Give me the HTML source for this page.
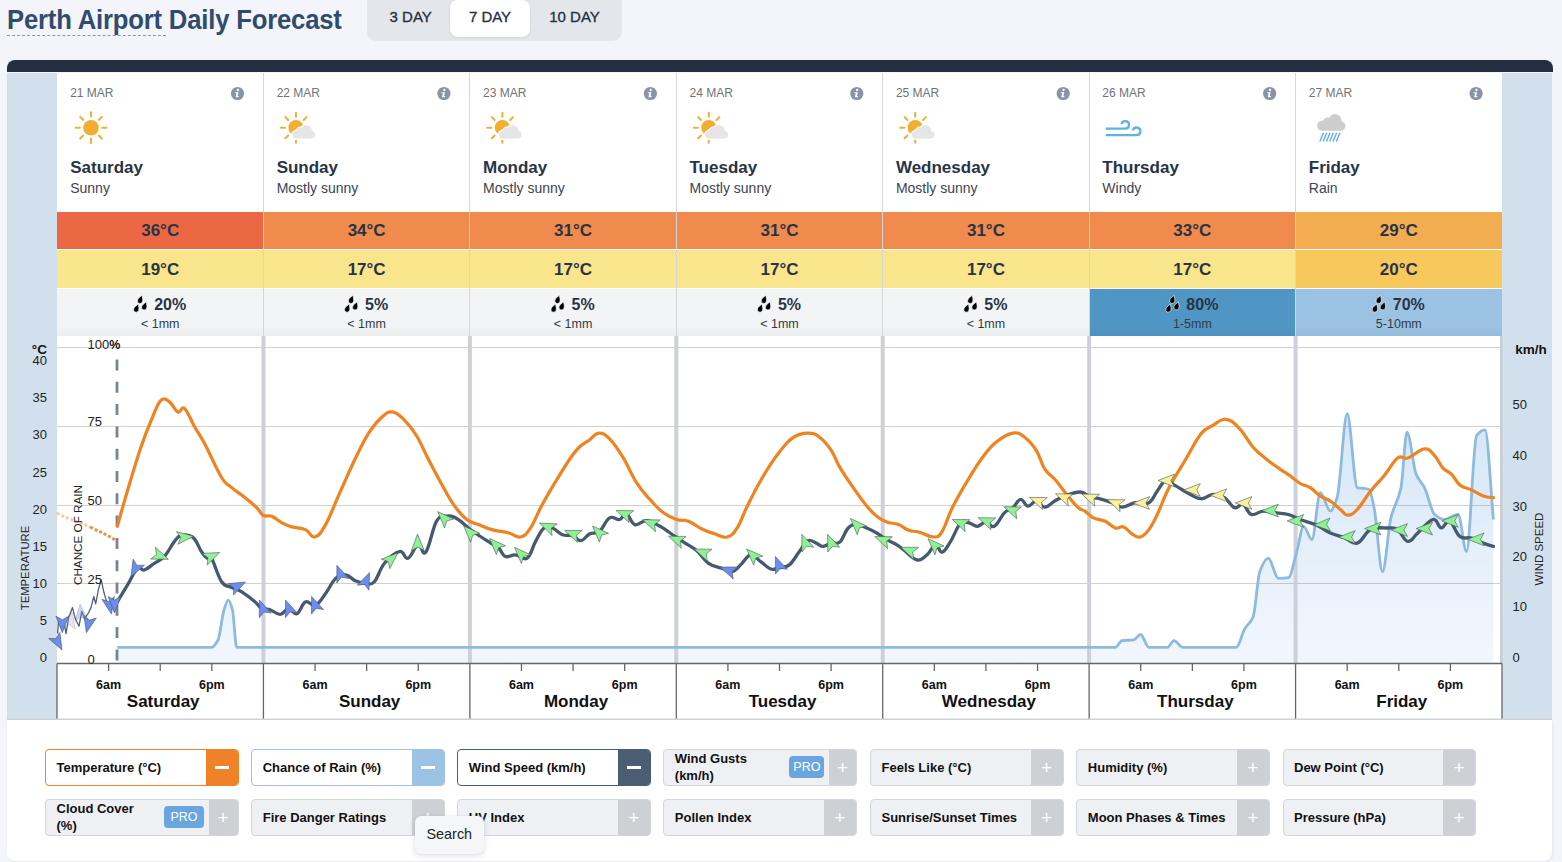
<!DOCTYPE html><html><head><meta charset="utf-8"><style>
*{box-sizing:border-box;margin:0;padding:0}
html,body{width:1562px;height:862px;overflow:hidden;background:#f3f5fa;font-family:"Liberation Sans", sans-serif;position:relative}
.a{position:absolute}
.t{position:absolute;white-space:nowrap;line-height:1}
</style></head><body>
<div class="t" style="left:7px;top:6px;font-size:27.4px;font-weight:700;color:#314b6f;transform:scaleX(0.937);transform-origin:0 0;letter-spacing:-0.2px">Perth Airport Daily Forecast</div><div class="a" style="left:7px;top:35px;width:159px;height:0;border-top:1px dashed #8d97a6"></div><div class="a" style="left:367px;top:-8px;width:255px;height:49px;background:#e3e6ea;border-radius:9px"></div><div class="a" style="left:450px;top:0px;width:80px;height:37px;background:#fff;border-radius:8px;box-shadow:0 1px 3px rgba(0,0,0,0.08)"></div><div class="t" style="left:360.7px;width:100px;text-align:center;top:9px;font-size:15px;color:#222e3d;-webkit-text-stroke:0.3px #222e3d">3 DAY</div><div class="t" style="left:440px;width:100px;text-align:center;top:9px;font-size:15px;color:#222e3d;-webkit-text-stroke:0.3px #222e3d">7 DAY</div><div class="t" style="left:524.5px;width:100px;text-align:center;top:9px;font-size:15px;color:#222e3d;-webkit-text-stroke:0.3px #222e3d">10 DAY</div><div class="a" style="left:7px;top:60px;width:1546px;height:12px;background:#232f40;border-radius:8px 8px 0 0"></div><div class="a" style="left:7px;top:73px;width:50px;height:647px;background:#d2e0ed"></div><div class="a" style="left:1502px;top:73px;width:50px;height:647px;background:#d2e0ed"></div><div class="a" style="left:57px;top:73px;width:1445px;height:139px;background:#fff"></div><div class="a" style="left:57.00px;top:212px;width:206.43px;height:37px;background:#ec6845"></div><div class="a" style="left:57.00px;top:249px;width:206.43px;height:1px;background:#fff"></div><div class="a" style="left:57.00px;top:250px;width:206.43px;height:38px;background:#f9e68c"></div><div class="a" style="left:57.00px;top:288px;width:206.43px;height:1px;background:#fff"></div><div class="a" style="left:57.00px;top:289px;width:206.43px;height:47px;background:#f3f4f6"></div><div class="a" style="left:57.00px;top:326px;width:206.43px;height:10px;background:linear-gradient(to bottom, rgba(0,0,0,0), rgba(0,0,0,0.035))"></div><div class="t" style="left:70.20px;top:87px;font-size:12px;color:#6f7378">21 MAR</div><div class="t" style="left:70.20px;top:159px;font-size:17px;font-weight:700;color:#263445">Saturday</div><div class="t" style="left:70.20px;top:181px;font-size:14px;color:#3a4452">Sunny</div><div class="t" style="left:100.21px;width:120px;text-align:center;top:222px;font-size:17px;font-weight:700;color:#283446">36°C</div><div class="t" style="left:100.21px;width:120px;text-align:center;top:261px;font-size:17px;font-weight:700;color:#283446">19°C</div><div class="t" style="left:110.21px;width:120px;text-align:center;top:297px;font-size:16px;font-weight:700;color:#283446">20%</div><div class="t" style="left:100.21px;width:120px;text-align:center;top:318px;font-size:12.5px;color:#333b46">&lt; 1mm</div><div class="a" style="left:263.43px;top:212px;width:206.43px;height:37px;background:#f08a4d"></div><div class="a" style="left:263.43px;top:249px;width:206.43px;height:1px;background:#fff"></div><div class="a" style="left:263.43px;top:250px;width:206.43px;height:38px;background:#f9e68c"></div><div class="a" style="left:263.43px;top:288px;width:206.43px;height:1px;background:#fff"></div><div class="a" style="left:263.43px;top:289px;width:206.43px;height:47px;background:#f3f4f6"></div><div class="a" style="left:263.43px;top:326px;width:206.43px;height:10px;background:linear-gradient(to bottom, rgba(0,0,0,0), rgba(0,0,0,0.035))"></div><div class="t" style="left:276.63px;top:87px;font-size:12px;color:#6f7378">22 MAR</div><div class="t" style="left:276.63px;top:159px;font-size:17px;font-weight:700;color:#263445">Sunday</div><div class="t" style="left:276.63px;top:181px;font-size:14px;color:#3a4452">Mostly sunny</div><div class="t" style="left:306.64px;width:120px;text-align:center;top:222px;font-size:17px;font-weight:700;color:#283446">34°C</div><div class="t" style="left:306.64px;width:120px;text-align:center;top:261px;font-size:17px;font-weight:700;color:#283446">17°C</div><div class="t" style="left:316.64px;width:120px;text-align:center;top:297px;font-size:16px;font-weight:700;color:#283446">5%</div><div class="t" style="left:306.64px;width:120px;text-align:center;top:318px;font-size:12.5px;color:#333b46">&lt; 1mm</div><div class="a" style="left:469.86px;top:212px;width:206.43px;height:37px;background:#f08a4d"></div><div class="a" style="left:469.86px;top:249px;width:206.43px;height:1px;background:#fff"></div><div class="a" style="left:469.86px;top:250px;width:206.43px;height:38px;background:#f9e68c"></div><div class="a" style="left:469.86px;top:288px;width:206.43px;height:1px;background:#fff"></div><div class="a" style="left:469.86px;top:289px;width:206.43px;height:47px;background:#f3f4f6"></div><div class="a" style="left:469.86px;top:326px;width:206.43px;height:10px;background:linear-gradient(to bottom, rgba(0,0,0,0), rgba(0,0,0,0.035))"></div><div class="t" style="left:483.06px;top:87px;font-size:12px;color:#6f7378">23 MAR</div><div class="t" style="left:483.06px;top:159px;font-size:17px;font-weight:700;color:#263445">Monday</div><div class="t" style="left:483.06px;top:181px;font-size:14px;color:#3a4452">Mostly sunny</div><div class="t" style="left:513.07px;width:120px;text-align:center;top:222px;font-size:17px;font-weight:700;color:#283446">31°C</div><div class="t" style="left:513.07px;width:120px;text-align:center;top:261px;font-size:17px;font-weight:700;color:#283446">17°C</div><div class="t" style="left:523.07px;width:120px;text-align:center;top:297px;font-size:16px;font-weight:700;color:#283446">5%</div><div class="t" style="left:513.07px;width:120px;text-align:center;top:318px;font-size:12.5px;color:#333b46">&lt; 1mm</div><div class="a" style="left:676.29px;top:212px;width:206.43px;height:37px;background:#f08a4d"></div><div class="a" style="left:676.29px;top:249px;width:206.43px;height:1px;background:#fff"></div><div class="a" style="left:676.29px;top:250px;width:206.43px;height:38px;background:#f9e68c"></div><div class="a" style="left:676.29px;top:288px;width:206.43px;height:1px;background:#fff"></div><div class="a" style="left:676.29px;top:289px;width:206.43px;height:47px;background:#f3f4f6"></div><div class="a" style="left:676.29px;top:326px;width:206.43px;height:10px;background:linear-gradient(to bottom, rgba(0,0,0,0), rgba(0,0,0,0.035))"></div><div class="t" style="left:689.49px;top:87px;font-size:12px;color:#6f7378">24 MAR</div><div class="t" style="left:689.49px;top:159px;font-size:17px;font-weight:700;color:#263445">Tuesday</div><div class="t" style="left:689.49px;top:181px;font-size:14px;color:#3a4452">Mostly sunny</div><div class="t" style="left:719.50px;width:120px;text-align:center;top:222px;font-size:17px;font-weight:700;color:#283446">31°C</div><div class="t" style="left:719.50px;width:120px;text-align:center;top:261px;font-size:17px;font-weight:700;color:#283446">17°C</div><div class="t" style="left:729.50px;width:120px;text-align:center;top:297px;font-size:16px;font-weight:700;color:#283446">5%</div><div class="t" style="left:719.50px;width:120px;text-align:center;top:318px;font-size:12.5px;color:#333b46">&lt; 1mm</div><div class="a" style="left:882.71px;top:212px;width:206.43px;height:37px;background:#f08a4d"></div><div class="a" style="left:882.71px;top:249px;width:206.43px;height:1px;background:#fff"></div><div class="a" style="left:882.71px;top:250px;width:206.43px;height:38px;background:#f9e68c"></div><div class="a" style="left:882.71px;top:288px;width:206.43px;height:1px;background:#fff"></div><div class="a" style="left:882.71px;top:289px;width:206.43px;height:47px;background:#f3f4f6"></div><div class="a" style="left:882.71px;top:326px;width:206.43px;height:10px;background:linear-gradient(to bottom, rgba(0,0,0,0), rgba(0,0,0,0.035))"></div><div class="t" style="left:895.91px;top:87px;font-size:12px;color:#6f7378">25 MAR</div><div class="t" style="left:895.91px;top:159px;font-size:17px;font-weight:700;color:#263445">Wednesday</div><div class="t" style="left:895.91px;top:181px;font-size:14px;color:#3a4452">Mostly sunny</div><div class="t" style="left:925.93px;width:120px;text-align:center;top:222px;font-size:17px;font-weight:700;color:#283446">31°C</div><div class="t" style="left:925.93px;width:120px;text-align:center;top:261px;font-size:17px;font-weight:700;color:#283446">17°C</div><div class="t" style="left:935.93px;width:120px;text-align:center;top:297px;font-size:16px;font-weight:700;color:#283446">5%</div><div class="t" style="left:925.93px;width:120px;text-align:center;top:318px;font-size:12.5px;color:#333b46">&lt; 1mm</div><div class="a" style="left:1089.14px;top:212px;width:206.43px;height:37px;background:#f08a4d"></div><div class="a" style="left:1089.14px;top:249px;width:206.43px;height:1px;background:#fff"></div><div class="a" style="left:1089.14px;top:250px;width:206.43px;height:38px;background:#f9e68c"></div><div class="a" style="left:1089.14px;top:288px;width:206.43px;height:1px;background:#fff"></div><div class="a" style="left:1089.14px;top:289px;width:206.43px;height:47px;background:#5096c4"></div><div class="a" style="left:1089.14px;top:326px;width:206.43px;height:10px;background:linear-gradient(to bottom, rgba(0,0,0,0), rgba(0,0,0,0.035))"></div><div class="t" style="left:1102.34px;top:87px;font-size:12px;color:#6f7378">26 MAR</div><div class="t" style="left:1102.34px;top:159px;font-size:17px;font-weight:700;color:#263445">Thursday</div><div class="t" style="left:1102.34px;top:181px;font-size:14px;color:#3a4452">Windy</div><div class="t" style="left:1132.36px;width:120px;text-align:center;top:222px;font-size:17px;font-weight:700;color:#283446">33°C</div><div class="t" style="left:1132.36px;width:120px;text-align:center;top:261px;font-size:17px;font-weight:700;color:#283446">17°C</div><div class="t" style="left:1142.36px;width:120px;text-align:center;top:297px;font-size:16px;font-weight:700;color:#283446">80%</div><div class="t" style="left:1132.36px;width:120px;text-align:center;top:318px;font-size:12.5px;color:#333b46">1-5mm</div><div class="a" style="left:1295.57px;top:212px;width:206.43px;height:37px;background:#f2ad50"></div><div class="a" style="left:1295.57px;top:249px;width:206.43px;height:1px;background:#fff"></div><div class="a" style="left:1295.57px;top:250px;width:206.43px;height:38px;background:#f7c95c"></div><div class="a" style="left:1295.57px;top:288px;width:206.43px;height:1px;background:#fff"></div><div class="a" style="left:1295.57px;top:289px;width:206.43px;height:47px;background:#9bc2e2"></div><div class="a" style="left:1295.57px;top:326px;width:206.43px;height:10px;background:linear-gradient(to bottom, rgba(0,0,0,0), rgba(0,0,0,0.035))"></div><div class="t" style="left:1308.77px;top:87px;font-size:12px;color:#6f7378">27 MAR</div><div class="t" style="left:1308.77px;top:159px;font-size:17px;font-weight:700;color:#263445">Friday</div><div class="t" style="left:1308.77px;top:181px;font-size:14px;color:#3a4452">Rain</div><div class="t" style="left:1338.79px;width:120px;text-align:center;top:222px;font-size:17px;font-weight:700;color:#283446">29°C</div><div class="t" style="left:1338.79px;width:120px;text-align:center;top:261px;font-size:17px;font-weight:700;color:#283446">20°C</div><div class="t" style="left:1348.79px;width:120px;text-align:center;top:297px;font-size:16px;font-weight:700;color:#283446">70%</div><div class="t" style="left:1338.79px;width:120px;text-align:center;top:318px;font-size:12.5px;color:#333b46">5-10mm</div><svg class="a" style="left:0;top:0" width="1562" height="340" viewBox="0 0 1562 340"><circle cx="237.50" cy="93.5" r="6.6" fill="#8893a5"/><circle cx="237.90" cy="90.00" r="1.15" fill="#fff"/><path transform="translate(237.50,93.5)" d="M-2.5,-1.3 L1,-1.3 L0.2,2.4 L1.3,2.4 L1.1,3.7 L-1.9,3.7 L-1.1,-0.4 L-2.7,-0.4 Z" fill="#fff"/><circle cx="91.00" cy="127.7" r="7.8" fill="#f2ae2f"/><line x1="102.20" y1="127.70" x2="106.30" y2="127.70" stroke="#f2ae2f" stroke-width="2.1" stroke-linecap="round"/><line x1="98.92" y1="135.62" x2="101.82" y2="138.52" stroke="#f2ae2f" stroke-width="2.1" stroke-linecap="round"/><line x1="91.00" y1="138.90" x2="91.00" y2="143.00" stroke="#f2ae2f" stroke-width="2.1" stroke-linecap="round"/><line x1="83.08" y1="135.62" x2="80.18" y2="138.52" stroke="#f2ae2f" stroke-width="2.1" stroke-linecap="round"/><line x1="79.80" y1="127.70" x2="75.70" y2="127.70" stroke="#f2ae2f" stroke-width="2.1" stroke-linecap="round"/><line x1="83.08" y1="119.78" x2="80.18" y2="116.88" stroke="#f2ae2f" stroke-width="2.1" stroke-linecap="round"/><line x1="91.00" y1="116.50" x2="91.00" y2="112.40" stroke="#f2ae2f" stroke-width="2.1" stroke-linecap="round"/><line x1="98.92" y1="119.78" x2="101.82" y2="116.88" stroke="#f2ae2f" stroke-width="2.1" stroke-linecap="round"/><path d="M140.21,295.00 C141.41,297.30 142.81,298.70 142.81,300.90 A2.6,2.6 0 1 1 137.61,300.90 C137.61,298.70 139.01,297.30 140.21,295.00 Z" fill="#000" stroke="#fff" stroke-width="0.6" transform="rotate(20 140.21 300.30)"/><path d="M136.41,303.70 C137.61,306.00 139.01,307.40 139.01,309.60 A2.6,2.6 0 1 1 133.81,309.60 C133.81,307.40 135.21,306.00 136.41,303.70 Z" fill="#000" stroke="#fff" stroke-width="0.6" transform="rotate(20 136.41 309.00)"/><path d="M144.41,301.50 C145.61,303.80 147.01,305.20 147.01,307.40 A2.6,2.6 0 1 1 141.81,307.40 C141.81,305.20 143.21,303.80 144.41,301.50 Z" fill="#000" stroke="#fff" stroke-width="0.6" transform="rotate(20 144.41 306.80)"/><circle cx="443.93" cy="93.5" r="6.6" fill="#8893a5"/><circle cx="444.33" cy="90.00" r="1.15" fill="#fff"/><path transform="translate(443.93,93.5)" d="M-2.5,-1.3 L1,-1.3 L0.2,2.4 L1.3,2.4 L1.1,3.7 L-1.9,3.7 L-1.1,-0.4 L-2.7,-0.4 Z" fill="#fff"/><circle cx="295.93" cy="127.7" r="7.6" fill="#f2ae2f"/><line x1="306.93" y1="127.70" x2="310.93" y2="127.70" stroke="#f2ae2f" stroke-width="2.0" stroke-linecap="round"/><line x1="303.71" y1="135.48" x2="306.54" y2="138.31" stroke="#f2ae2f" stroke-width="2.0" stroke-linecap="round"/><line x1="295.93" y1="138.70" x2="295.93" y2="142.70" stroke="#f2ae2f" stroke-width="2.0" stroke-linecap="round"/><line x1="288.15" y1="135.48" x2="285.32" y2="138.31" stroke="#f2ae2f" stroke-width="2.0" stroke-linecap="round"/><line x1="284.93" y1="127.70" x2="280.93" y2="127.70" stroke="#f2ae2f" stroke-width="2.0" stroke-linecap="round"/><line x1="288.15" y1="119.92" x2="285.32" y2="117.09" stroke="#f2ae2f" stroke-width="2.0" stroke-linecap="round"/><line x1="295.93" y1="116.70" x2="295.93" y2="112.70" stroke="#f2ae2f" stroke-width="2.0" stroke-linecap="round"/><line x1="303.71" y1="119.92" x2="306.54" y2="117.09" stroke="#f2ae2f" stroke-width="2.0" stroke-linecap="round"/><g fill="#ffffff" stroke="#ffffff" stroke-width="2.2"><circle cx="296.13" cy="134.80" r="3.8"/><circle cx="300.53" cy="131.60" r="4"/><circle cx="306.33" cy="130.60" r="5.6"/><circle cx="311.33" cy="134.80" r="3.8"/><rect x="296.13" y="130.60" width="15.2" height="8"/></g><g fill="#e6e6e6"><circle cx="296.13" cy="134.80" r="3.8"/><circle cx="300.53" cy="131.60" r="4"/><circle cx="306.33" cy="130.60" r="5.6"/><circle cx="311.33" cy="134.80" r="3.8"/><rect x="296.13" y="130.60" width="15.2" height="8"/></g><path d="M351.14,295.00 C352.34,297.30 353.74,298.70 353.74,300.90 A2.6,2.6 0 1 1 348.54,300.90 C348.54,298.70 349.94,297.30 351.14,295.00 Z" fill="#000" stroke="#fff" stroke-width="0.6" transform="rotate(20 351.14 300.30)"/><path d="M347.34,303.70 C348.54,306.00 349.94,307.40 349.94,309.60 A2.6,2.6 0 1 1 344.74,309.60 C344.74,307.40 346.14,306.00 347.34,303.70 Z" fill="#000" stroke="#fff" stroke-width="0.6" transform="rotate(20 347.34 309.00)"/><path d="M355.34,301.50 C356.54,303.80 357.94,305.20 357.94,307.40 A2.6,2.6 0 1 1 352.74,307.40 C352.74,305.20 354.14,303.80 355.34,301.50 Z" fill="#000" stroke="#fff" stroke-width="0.6" transform="rotate(20 355.34 306.80)"/><circle cx="650.36" cy="93.5" r="6.6" fill="#8893a5"/><circle cx="650.76" cy="90.00" r="1.15" fill="#fff"/><path transform="translate(650.36,93.5)" d="M-2.5,-1.3 L1,-1.3 L0.2,2.4 L1.3,2.4 L1.1,3.7 L-1.9,3.7 L-1.1,-0.4 L-2.7,-0.4 Z" fill="#fff"/><circle cx="502.36" cy="127.7" r="7.6" fill="#f2ae2f"/><line x1="513.36" y1="127.70" x2="517.36" y2="127.70" stroke="#f2ae2f" stroke-width="2.0" stroke-linecap="round"/><line x1="510.14" y1="135.48" x2="512.96" y2="138.31" stroke="#f2ae2f" stroke-width="2.0" stroke-linecap="round"/><line x1="502.36" y1="138.70" x2="502.36" y2="142.70" stroke="#f2ae2f" stroke-width="2.0" stroke-linecap="round"/><line x1="494.58" y1="135.48" x2="491.75" y2="138.31" stroke="#f2ae2f" stroke-width="2.0" stroke-linecap="round"/><line x1="491.36" y1="127.70" x2="487.36" y2="127.70" stroke="#f2ae2f" stroke-width="2.0" stroke-linecap="round"/><line x1="494.58" y1="119.92" x2="491.75" y2="117.09" stroke="#f2ae2f" stroke-width="2.0" stroke-linecap="round"/><line x1="502.36" y1="116.70" x2="502.36" y2="112.70" stroke="#f2ae2f" stroke-width="2.0" stroke-linecap="round"/><line x1="510.14" y1="119.92" x2="512.96" y2="117.09" stroke="#f2ae2f" stroke-width="2.0" stroke-linecap="round"/><g fill="#ffffff" stroke="#ffffff" stroke-width="2.2"><circle cx="502.56" cy="134.80" r="3.8"/><circle cx="506.96" cy="131.60" r="4"/><circle cx="512.76" cy="130.60" r="5.6"/><circle cx="517.76" cy="134.80" r="3.8"/><rect x="502.56" y="130.60" width="15.2" height="8"/></g><g fill="#e6e6e6"><circle cx="502.56" cy="134.80" r="3.8"/><circle cx="506.96" cy="131.60" r="4"/><circle cx="512.76" cy="130.60" r="5.6"/><circle cx="517.76" cy="134.80" r="3.8"/><rect x="502.56" y="130.60" width="15.2" height="8"/></g><path d="M557.57,295.00 C558.77,297.30 560.17,298.70 560.17,300.90 A2.6,2.6 0 1 1 554.97,300.90 C554.97,298.70 556.37,297.30 557.57,295.00 Z" fill="#000" stroke="#fff" stroke-width="0.6" transform="rotate(20 557.57 300.30)"/><path d="M553.77,303.70 C554.97,306.00 556.37,307.40 556.37,309.60 A2.6,2.6 0 1 1 551.17,309.60 C551.17,307.40 552.57,306.00 553.77,303.70 Z" fill="#000" stroke="#fff" stroke-width="0.6" transform="rotate(20 553.77 309.00)"/><path d="M561.77,301.50 C562.97,303.80 564.37,305.20 564.37,307.40 A2.6,2.6 0 1 1 559.17,307.40 C559.17,305.20 560.57,303.80 561.77,301.50 Z" fill="#000" stroke="#fff" stroke-width="0.6" transform="rotate(20 561.77 306.80)"/><circle cx="856.79" cy="93.5" r="6.6" fill="#8893a5"/><circle cx="857.19" cy="90.00" r="1.15" fill="#fff"/><path transform="translate(856.79,93.5)" d="M-2.5,-1.3 L1,-1.3 L0.2,2.4 L1.3,2.4 L1.1,3.7 L-1.9,3.7 L-1.1,-0.4 L-2.7,-0.4 Z" fill="#fff"/><circle cx="708.79" cy="127.7" r="7.6" fill="#f2ae2f"/><line x1="719.79" y1="127.70" x2="723.79" y2="127.70" stroke="#f2ae2f" stroke-width="2.0" stroke-linecap="round"/><line x1="716.56" y1="135.48" x2="719.39" y2="138.31" stroke="#f2ae2f" stroke-width="2.0" stroke-linecap="round"/><line x1="708.79" y1="138.70" x2="708.79" y2="142.70" stroke="#f2ae2f" stroke-width="2.0" stroke-linecap="round"/><line x1="701.01" y1="135.48" x2="698.18" y2="138.31" stroke="#f2ae2f" stroke-width="2.0" stroke-linecap="round"/><line x1="697.79" y1="127.70" x2="693.79" y2="127.70" stroke="#f2ae2f" stroke-width="2.0" stroke-linecap="round"/><line x1="701.01" y1="119.92" x2="698.18" y2="117.09" stroke="#f2ae2f" stroke-width="2.0" stroke-linecap="round"/><line x1="708.79" y1="116.70" x2="708.79" y2="112.70" stroke="#f2ae2f" stroke-width="2.0" stroke-linecap="round"/><line x1="716.56" y1="119.92" x2="719.39" y2="117.09" stroke="#f2ae2f" stroke-width="2.0" stroke-linecap="round"/><g fill="#ffffff" stroke="#ffffff" stroke-width="2.2"><circle cx="708.99" cy="134.80" r="3.8"/><circle cx="713.39" cy="131.60" r="4"/><circle cx="719.19" cy="130.60" r="5.6"/><circle cx="724.19" cy="134.80" r="3.8"/><rect x="708.99" y="130.60" width="15.2" height="8"/></g><g fill="#e6e6e6"><circle cx="708.99" cy="134.80" r="3.8"/><circle cx="713.39" cy="131.60" r="4"/><circle cx="719.19" cy="130.60" r="5.6"/><circle cx="724.19" cy="134.80" r="3.8"/><rect x="708.99" y="130.60" width="15.2" height="8"/></g><path d="M764.00,295.00 C765.20,297.30 766.60,298.70 766.60,300.90 A2.6,2.6 0 1 1 761.40,300.90 C761.40,298.70 762.80,297.30 764.00,295.00 Z" fill="#000" stroke="#fff" stroke-width="0.6" transform="rotate(20 764.00 300.30)"/><path d="M760.20,303.70 C761.40,306.00 762.80,307.40 762.80,309.60 A2.6,2.6 0 1 1 757.60,309.60 C757.60,307.40 759.00,306.00 760.20,303.70 Z" fill="#000" stroke="#fff" stroke-width="0.6" transform="rotate(20 760.20 309.00)"/><path d="M768.20,301.50 C769.40,303.80 770.80,305.20 770.80,307.40 A2.6,2.6 0 1 1 765.60,307.40 C765.60,305.20 767.00,303.80 768.20,301.50 Z" fill="#000" stroke="#fff" stroke-width="0.6" transform="rotate(20 768.20 306.80)"/><circle cx="1063.21" cy="93.5" r="6.6" fill="#8893a5"/><circle cx="1063.61" cy="90.00" r="1.15" fill="#fff"/><path transform="translate(1063.21,93.5)" d="M-2.5,-1.3 L1,-1.3 L0.2,2.4 L1.3,2.4 L1.1,3.7 L-1.9,3.7 L-1.1,-0.4 L-2.7,-0.4 Z" fill="#fff"/><circle cx="915.21" cy="127.7" r="7.6" fill="#f2ae2f"/><line x1="926.21" y1="127.70" x2="930.21" y2="127.70" stroke="#f2ae2f" stroke-width="2.0" stroke-linecap="round"/><line x1="922.99" y1="135.48" x2="925.82" y2="138.31" stroke="#f2ae2f" stroke-width="2.0" stroke-linecap="round"/><line x1="915.21" y1="138.70" x2="915.21" y2="142.70" stroke="#f2ae2f" stroke-width="2.0" stroke-linecap="round"/><line x1="907.44" y1="135.48" x2="904.61" y2="138.31" stroke="#f2ae2f" stroke-width="2.0" stroke-linecap="round"/><line x1="904.21" y1="127.70" x2="900.21" y2="127.70" stroke="#f2ae2f" stroke-width="2.0" stroke-linecap="round"/><line x1="907.44" y1="119.92" x2="904.61" y2="117.09" stroke="#f2ae2f" stroke-width="2.0" stroke-linecap="round"/><line x1="915.21" y1="116.70" x2="915.21" y2="112.70" stroke="#f2ae2f" stroke-width="2.0" stroke-linecap="round"/><line x1="922.99" y1="119.92" x2="925.82" y2="117.09" stroke="#f2ae2f" stroke-width="2.0" stroke-linecap="round"/><g fill="#ffffff" stroke="#ffffff" stroke-width="2.2"><circle cx="915.41" cy="134.80" r="3.8"/><circle cx="919.81" cy="131.60" r="4"/><circle cx="925.61" cy="130.60" r="5.6"/><circle cx="930.61" cy="134.80" r="3.8"/><rect x="915.41" y="130.60" width="15.2" height="8"/></g><g fill="#e6e6e6"><circle cx="915.41" cy="134.80" r="3.8"/><circle cx="919.81" cy="131.60" r="4"/><circle cx="925.61" cy="130.60" r="5.6"/><circle cx="930.61" cy="134.80" r="3.8"/><rect x="915.41" y="130.60" width="15.2" height="8"/></g><path d="M970.43,295.00 C971.63,297.30 973.03,298.70 973.03,300.90 A2.6,2.6 0 1 1 967.83,300.90 C967.83,298.70 969.23,297.30 970.43,295.00 Z" fill="#000" stroke="#fff" stroke-width="0.6" transform="rotate(20 970.43 300.30)"/><path d="M966.63,303.70 C967.83,306.00 969.23,307.40 969.23,309.60 A2.6,2.6 0 1 1 964.03,309.60 C964.03,307.40 965.43,306.00 966.63,303.70 Z" fill="#000" stroke="#fff" stroke-width="0.6" transform="rotate(20 966.63 309.00)"/><path d="M974.63,301.50 C975.83,303.80 977.23,305.20 977.23,307.40 A2.6,2.6 0 1 1 972.03,307.40 C972.03,305.20 973.43,303.80 974.63,301.50 Z" fill="#000" stroke="#fff" stroke-width="0.6" transform="rotate(20 974.63 306.80)"/><circle cx="1269.64" cy="93.5" r="6.6" fill="#8893a5"/><circle cx="1270.04" cy="90.00" r="1.15" fill="#fff"/><path transform="translate(1269.64,93.5)" d="M-2.5,-1.3 L1,-1.3 L0.2,2.4 L1.3,2.4 L1.1,3.7 L-1.9,3.7 L-1.1,-0.4 L-2.7,-0.4 Z" fill="#fff"/><path d="M1105.74,128.7 L1125.24,128.7 A3.8,3.8 0 1 0 1121.54,124" fill="none" stroke="#5db1e6" stroke-width="2.3"/><path d="M1105.74,135.1 L1136.54,135.1 A3.8,3.8 0 1 0 1132.84,130.4" fill="none" stroke="#5db1e6" stroke-width="2.3"/><path d="M1172.36,295.00 C1173.56,297.30 1174.96,298.70 1174.96,300.90 A2.6,2.6 0 1 1 1169.76,300.90 C1169.76,298.70 1171.16,297.30 1172.36,295.00 Z" fill="#000" stroke="#fff" stroke-width="0.6" transform="rotate(20 1172.36 300.30)"/><path d="M1168.56,303.70 C1169.76,306.00 1171.16,307.40 1171.16,309.60 A2.6,2.6 0 1 1 1165.96,309.60 C1165.96,307.40 1167.36,306.00 1168.56,303.70 Z" fill="#000" stroke="#fff" stroke-width="0.6" transform="rotate(20 1168.56 309.00)"/><path d="M1176.56,301.50 C1177.76,303.80 1179.16,305.20 1179.16,307.40 A2.6,2.6 0 1 1 1173.96,307.40 C1173.96,305.20 1175.36,303.80 1176.56,301.50 Z" fill="#000" stroke="#fff" stroke-width="0.6" transform="rotate(20 1176.56 306.80)"/><circle cx="1476.07" cy="93.5" r="6.6" fill="#8893a5"/><circle cx="1476.47" cy="90.00" r="1.15" fill="#fff"/><path transform="translate(1476.07,93.5)" d="M-2.5,-1.3 L1,-1.3 L0.2,2.4 L1.3,2.4 L1.1,3.7 L-1.9,3.7 L-1.1,-0.4 L-2.7,-0.4 Z" fill="#fff"/><g fill="#cdcdcd"><circle cx="1322.17" cy="125.80" r="5"/><circle cx="1327.67" cy="122.00" r="4.5"/><circle cx="1335.17" cy="120.50" r="6.4"/><circle cx="1340.67" cy="126.00" r="4.7"/><rect x="1322.17" y="120.80" width="18.5" height="10"/></g><line x1="1319.87" y1="141.5" x2="1323.47" y2="132.8" stroke="#5db1e6" stroke-width="1.4"/><line x1="1323.17" y1="141.5" x2="1326.77" y2="132.8" stroke="#5db1e6" stroke-width="1.4"/><line x1="1326.47" y1="141.5" x2="1330.07" y2="132.8" stroke="#5db1e6" stroke-width="1.4"/><line x1="1329.77" y1="141.5" x2="1333.37" y2="132.8" stroke="#5db1e6" stroke-width="1.4"/><line x1="1333.07" y1="141.5" x2="1336.67" y2="132.8" stroke="#5db1e6" stroke-width="1.4"/><line x1="1336.37" y1="141.5" x2="1339.97" y2="132.8" stroke="#5db1e6" stroke-width="1.4"/><path d="M1378.79,295.00 C1379.99,297.30 1381.39,298.70 1381.39,300.90 A2.6,2.6 0 1 1 1376.19,300.90 C1376.19,298.70 1377.59,297.30 1378.79,295.00 Z" fill="#000" stroke="#fff" stroke-width="0.6" transform="rotate(20 1378.79 300.30)"/><path d="M1374.99,303.70 C1376.19,306.00 1377.59,307.40 1377.59,309.60 A2.6,2.6 0 1 1 1372.39,309.60 C1372.39,307.40 1373.79,306.00 1374.99,303.70 Z" fill="#000" stroke="#fff" stroke-width="0.6" transform="rotate(20 1374.99 309.00)"/><path d="M1382.99,301.50 C1384.19,303.80 1385.59,305.20 1385.59,307.40 A2.6,2.6 0 1 1 1380.39,307.40 C1380.39,305.20 1381.79,303.80 1382.99,301.50 Z" fill="#000" stroke="#fff" stroke-width="0.6" transform="rotate(20 1382.99 306.80)"/></svg><div class="a" style="left:262.93px;top:73px;width:1px;height:263px;background:#d3d6da"></div><div class="a" style="left:469.36px;top:73px;width:1px;height:263px;background:#d3d6da"></div><div class="a" style="left:675.79px;top:73px;width:1px;height:263px;background:#d3d6da"></div><div class="a" style="left:882.21px;top:73px;width:1px;height:263px;background:#d3d6da"></div><div class="a" style="left:1088.64px;top:73px;width:1px;height:263px;background:#d3d6da"></div><div class="a" style="left:1295.07px;top:73px;width:1px;height:263px;background:#d3d6da"></div><div class="a" style="left:57px;top:336px;width:1445px;height:384px;background:#fff"></div><svg class="a" style="left:0;top:0" width="1562" height="862" viewBox="0 0 1562 862"><defs><linearGradient id="rg" x1="0" y1="0" x2="0" y2="1" gradientUnits="userSpaceOnUse" ><stop offset="0" stop-color="#d3e5f6"/><stop offset="1" stop-color="#eef5fc"/></linearGradient><linearGradient id="rg2" gradientUnits="userSpaceOnUse" x1="0" y1="410" x2="0" y2="663"><stop offset="0" stop-color="#d4e6f7"/><stop offset="1" stop-color="#f2f7fd"/></linearGradient></defs><path d="M117.3,647.3 C148.7,647.3 180.1,647.3 211.5,647.3 C213.7,647.3 215.8,644.0 218.0,640.0 C220.0,636.3 222.0,616.1 224.0,610.0 C225.4,605.6 226.9,600.2 228.3,600.2 C229.7,600.2 231.1,604.8 232.5,610.0 C233.9,615.2 235.3,647.3 236.7,647.3 C529.6,647.3 822.4,647.3 1115.3,647.3 C1117.5,647.3 1119.8,640.9 1122.0,640.6 C1125.9,640.1 1129.9,640.4 1133.8,639.9 C1136.0,639.6 1138.3,634.5 1140.5,634.5 C1143.3,634.5 1146.1,647.3 1148.9,647.3 C1155.1,647.3 1161.2,647.3 1167.4,647.3 C1169.6,647.3 1171.9,640.6 1174.1,640.6 C1176.9,640.6 1179.7,647.3 1182.5,647.3 C1200.4,647.3 1218.4,647.3 1236.3,647.3 C1239.1,647.3 1241.9,633.6 1244.7,628.8 C1247.5,624.0 1250.3,623.7 1253.1,617.0 C1255.3,611.7 1257.6,577.6 1259.8,571.7 C1262.6,564.2 1265.5,558.2 1268.3,558.2 C1271.6,558.2 1275.0,578.4 1278.3,578.4 C1281.7,578.4 1285.0,578.2 1288.4,577.7 C1291.2,577.3 1294.0,561.0 1296.8,551.5 C1299.1,543.8 1301.3,526.3 1303.6,526.3 C1306.4,526.3 1309.1,539.7 1311.9,539.7 C1314.7,539.7 1317.5,492.6 1320.3,492.6 C1323.6,492.6 1327.0,511.1 1330.3,511.1 C1332.6,511.1 1334.8,504.6 1337.1,497.7 C1340.5,487.4 1343.8,413.6 1347.2,413.6 C1350.5,413.6 1353.9,486.6 1357.2,487.6 C1361.1,488.7 1365.1,488.1 1369.0,489.3 C1370.7,489.8 1372.4,499.7 1374.1,507.8 C1376.9,521.2 1379.7,571.7 1382.5,571.7 C1385.3,571.7 1388.1,529.5 1390.9,517.9 C1394.3,504.0 1397.6,503.5 1401.0,487.6 C1403.0,478.1 1405.0,432.1 1407.0,432.1 C1410.0,432.1 1413.1,466.9 1416.1,474.1 C1418.9,480.7 1421.7,482.0 1424.5,487.6 C1427.9,494.3 1431.2,511.7 1434.6,514.5 C1438.0,517.3 1441.3,519.5 1444.7,519.5 C1449.2,519.5 1453.6,514.5 1458.1,514.5 C1460.9,514.5 1463.7,551.5 1466.5,551.5 C1469.9,551.5 1473.2,439.7 1476.6,435.5 C1479.4,432.0 1482.2,429.8 1485.0,429.8 C1487.8,429.8 1490.6,489.6 1493.4,519.5 L1493.4,663 L117.3,663 Z" fill="url(#rg2)"/><rect x="57" y="347" width="1445" height="1" fill="#000" fill-opacity="0.18"/><rect x="57" y="426" width="1445" height="1" fill="#000" fill-opacity="0.18"/><rect x="57" y="505" width="1445" height="1" fill="#000" fill-opacity="0.18"/><rect x="57" y="583" width="1445" height="1" fill="#000" fill-opacity="0.18"/><rect x="261.43" y="336" width="4" height="327.5" fill="#cdd1d7"/><rect x="467.86" y="336" width="4" height="327.5" fill="#cdd1d7"/><rect x="674.29" y="336" width="4" height="327.5" fill="#cdd1d7"/><rect x="880.71" y="336" width="4" height="327.5" fill="#cdd1d7"/><rect x="1087.14" y="336" width="4" height="327.5" fill="#cdd1d7"/><rect x="1293.57" y="336" width="4" height="327.5" fill="#cdd1d7"/><rect x="1500" y="336" width="2.5" height="327.5" fill="#c9cdd3"/><path d="M117.3,647.3 C148.7,647.3 180.1,647.3 211.5,647.3 C213.7,647.3 215.8,644.0 218.0,640.0 C220.0,636.3 222.0,616.1 224.0,610.0 C225.4,605.6 226.9,600.2 228.3,600.2 C229.7,600.2 231.1,604.8 232.5,610.0 C233.9,615.2 235.3,647.3 236.7,647.3 C529.6,647.3 822.4,647.3 1115.3,647.3 C1117.5,647.3 1119.8,640.9 1122.0,640.6 C1125.9,640.1 1129.9,640.4 1133.8,639.9 C1136.0,639.6 1138.3,634.5 1140.5,634.5 C1143.3,634.5 1146.1,647.3 1148.9,647.3 C1155.1,647.3 1161.2,647.3 1167.4,647.3 C1169.6,647.3 1171.9,640.6 1174.1,640.6 C1176.9,640.6 1179.7,647.3 1182.5,647.3 C1200.4,647.3 1218.4,647.3 1236.3,647.3 C1239.1,647.3 1241.9,633.6 1244.7,628.8 C1247.5,624.0 1250.3,623.7 1253.1,617.0 C1255.3,611.7 1257.6,577.6 1259.8,571.7 C1262.6,564.2 1265.5,558.2 1268.3,558.2 C1271.6,558.2 1275.0,578.4 1278.3,578.4 C1281.7,578.4 1285.0,578.2 1288.4,577.7 C1291.2,577.3 1294.0,561.0 1296.8,551.5 C1299.1,543.8 1301.3,526.3 1303.6,526.3 C1306.4,526.3 1309.1,539.7 1311.9,539.7 C1314.7,539.7 1317.5,492.6 1320.3,492.6 C1323.6,492.6 1327.0,511.1 1330.3,511.1 C1332.6,511.1 1334.8,504.6 1337.1,497.7 C1340.5,487.4 1343.8,413.6 1347.2,413.6 C1350.5,413.6 1353.9,486.6 1357.2,487.6 C1361.1,488.7 1365.1,488.1 1369.0,489.3 C1370.7,489.8 1372.4,499.7 1374.1,507.8 C1376.9,521.2 1379.7,571.7 1382.5,571.7 C1385.3,571.7 1388.1,529.5 1390.9,517.9 C1394.3,504.0 1397.6,503.5 1401.0,487.6 C1403.0,478.1 1405.0,432.1 1407.0,432.1 C1410.0,432.1 1413.1,466.9 1416.1,474.1 C1418.9,480.7 1421.7,482.0 1424.5,487.6 C1427.9,494.3 1431.2,511.7 1434.6,514.5 C1438.0,517.3 1441.3,519.5 1444.7,519.5 C1449.2,519.5 1453.6,514.5 1458.1,514.5 C1460.9,514.5 1463.7,551.5 1466.5,551.5 C1469.9,551.5 1473.2,439.7 1476.6,435.5 C1479.4,432.0 1482.2,429.8 1485.0,429.8 C1487.8,429.8 1490.6,489.6 1493.4,519.5" fill="none" stroke="#8dbadf" stroke-width="2.8" stroke-linejoin="round"/><path d="M56.7,513 C70,520 80,522 90,527" fill="none" stroke="#f9cba8" stroke-width="3" stroke-dasharray="3 2"/><path d="M90,527 C100,532 108,535 116.5,541" fill="none" stroke="#f0903f" stroke-width="3" stroke-dasharray="3 2"/><path d="M57.6,633.6 L58.6,618.8 L61.3,628.1 L64.1,622.5 L66.0,633.6 L68.8,616.9 L72.5,607.6 L75.3,618.8 L79.0,626.2 L81.8,611.4 L84.5,618.8 L88.3,613.2 L91.0,607.6 L93.8,596.5 L95.7,603.9 L98.5,589.1 L101.2,579.8 L104.0,592.8 L106.8,602.1 L110.5,603.9 L117.3,601.9" fill="none" stroke="#4f6277" stroke-width="1.3" stroke-linejoin="round"/><line x1="117" y1="359.5" x2="117" y2="663" stroke="#778497" stroke-width="2.8" stroke-dasharray="11 11.3"/><path d="M117.3,526.3 C119.3,519.2 122.7,506.8 127.4,491.0 C132.1,475.2 135.9,462.0 140.9,447.2 C145.9,432.4 148.6,426.4 152.6,417.0 C156.6,407.6 157.6,403.2 161.0,400.2 C164.4,397.2 166.1,399.5 169.5,401.9 C172.9,404.3 174.9,410.7 177.9,412.0 C180.9,413.3 181.2,405.6 184.6,408.6 C188.0,411.6 190.7,419.9 194.7,427.0 C198.7,434.1 199.4,433.8 204.8,443.9 C210.2,454.0 216.2,468.8 221.6,477.5 C227.0,486.2 227.0,483.6 231.7,487.6 C236.4,491.6 240.1,493.7 245.1,497.7 C250.1,501.7 253.2,504.2 256.9,507.8 C260.6,511.4 260.4,513.8 263.4,515.5 C266.4,517.2 268.1,514.7 271.8,516.2 C275.5,517.7 277.9,520.8 281.9,522.9 C285.9,525.0 287.3,525.6 292.0,526.9 C296.7,528.2 300.8,527.6 305.4,529.6 C310.0,531.6 310.9,538.0 314.9,537.0 C318.9,536.0 320.8,533.1 325.6,524.6 C330.4,516.1 333.0,507.8 339.1,494.3 C345.2,480.8 349.9,469.7 355.9,457.3 C361.9,444.9 363.9,440.3 369.3,432.1 C374.7,423.9 378.2,420.3 382.8,416.3 C387.4,412.3 388.2,411.4 392.2,411.9 C396.2,412.4 398.2,414.0 403.0,418.7 C407.8,423.4 411.4,427.4 416.4,435.5 C421.4,443.6 423.5,449.9 428.2,459.0 C432.9,468.1 434.9,471.8 439.9,480.9 C444.9,490.0 448.0,496.7 453.4,504.4 C458.8,512.1 461.8,515.5 466.8,519.5 C471.8,523.5 473.4,522.6 478.4,524.6 C483.4,526.6 485.8,527.9 491.9,529.6 C498.0,531.3 503.0,531.5 508.7,533.0 C514.4,534.5 516.1,538.0 520.5,537.0 C524.9,536.0 526.2,534.4 530.6,527.9 C535.0,521.4 536.6,514.8 542.3,504.4 C548.0,494.0 552.4,486.6 559.1,475.8 C565.8,465.0 569.9,457.8 576.0,450.6 C582.1,443.4 584.8,443.4 589.4,439.9 C594.0,436.4 594.8,433.3 598.8,433.1 C602.8,432.9 604.8,434.0 609.6,438.8 C614.4,443.6 617.6,448.5 623.0,457.3 C628.4,466.1 631.1,474.2 636.5,482.6 C641.9,491.0 644.5,493.4 649.9,499.4 C655.3,505.4 658.0,508.8 663.4,512.8 C668.8,516.8 671.8,517.8 676.8,519.5 C681.8,521.2 683.4,519.3 688.4,521.2 C693.4,523.1 696.5,526.4 701.9,529.0 C707.3,531.6 710.3,532.4 715.3,534.0 C720.3,535.6 722.7,538.2 727.1,537.0 C731.5,535.8 733.2,534.1 737.2,527.9 C741.2,521.7 742.3,516.2 747.3,506.1 C752.3,496.0 756.0,488.3 762.4,477.5 C768.8,466.7 773.1,460.2 779.2,452.3 C785.3,444.4 787.0,441.6 792.7,437.8 C798.4,434.0 802.4,433.2 807.8,433.1 C813.2,433.0 814.9,433.7 819.6,437.2 C824.3,440.7 827.4,444.6 831.4,450.6 C835.4,456.6 835.4,460.0 839.8,467.4 C844.2,474.8 847.8,479.9 853.2,487.6 C858.6,495.3 862.0,500.4 866.7,506.1 C871.4,511.8 872.7,513.0 876.7,516.2 C880.7,519.4 882.3,520.2 886.7,521.9 C891.1,523.6 894.1,522.9 898.5,524.6 C902.9,526.3 904.6,528.8 908.6,530.3 C912.6,531.8 913.7,530.7 918.7,532.0 C923.7,533.3 929.1,537.1 933.8,537.0 C938.5,536.9 938.5,537.1 942.2,531.3 C945.9,525.5 947.3,517.9 952.3,507.8 C957.3,497.7 961.3,491.0 967.4,480.9 C973.5,470.8 976.9,465.0 982.6,457.3 C988.3,449.6 990.0,447.0 996.0,442.2 C1002.0,437.4 1007.1,434.1 1012.8,433.1 C1018.5,432.1 1019.9,433.7 1024.6,437.2 C1029.3,440.7 1032.4,444.2 1036.4,450.6 C1040.4,457.0 1041.1,463.4 1044.8,469.1 C1048.5,474.8 1050.4,474.2 1054.8,479.2 C1059.2,484.2 1061.9,488.6 1066.6,494.3 C1071.3,500.0 1074.7,504.4 1078.4,507.8 C1082.1,511.2 1082.0,509.1 1085.0,511.1 C1088.0,513.1 1089.4,515.9 1093.4,517.9 C1097.4,519.9 1100.8,519.2 1105.2,521.2 C1109.6,523.2 1111.6,526.9 1115.3,528.0 C1119.0,529.1 1120.3,525.7 1123.7,526.9 C1127.1,528.1 1128.7,532.0 1132.1,534.0 C1135.5,536.0 1137.1,537.9 1140.5,537.0 C1143.9,536.1 1145.5,534.1 1148.9,529.6 C1152.3,525.1 1153.3,522.9 1157.3,514.5 C1161.3,506.1 1163.4,498.7 1169.1,487.6 C1174.8,476.5 1179.5,469.8 1185.9,459.0 C1192.3,448.2 1195.6,440.5 1201.0,433.8 C1206.4,427.1 1207.8,428.3 1212.8,425.4 C1217.8,422.5 1220.8,418.6 1226.2,419.3 C1231.6,420.0 1234.3,423.2 1239.7,428.8 C1245.1,434.4 1247.4,440.8 1253.1,447.2 C1258.8,453.6 1262.9,456.3 1268.3,460.7 C1273.7,465.1 1275.6,466.1 1280.0,469.1 C1284.4,472.1 1286.1,472.9 1290.1,475.8 C1294.1,478.7 1296.2,481.1 1300.2,483.5 C1304.2,485.9 1306.2,485.1 1310.2,487.6 C1314.2,490.1 1316.3,493.3 1320.3,496.0 C1324.3,498.7 1326.3,498.3 1330.3,501.0 C1334.3,503.7 1336.9,506.7 1340.4,509.5 C1343.9,512.3 1344.4,515.2 1347.8,515.2 C1351.2,515.2 1352.6,514.3 1357.2,509.5 C1361.8,504.7 1365.3,497.7 1370.7,491.0 C1376.1,484.3 1378.7,482.4 1384.1,475.8 C1389.5,469.2 1392.9,461.6 1397.6,458.0 C1402.3,454.4 1402.3,459.8 1407.7,458.0 C1413.1,456.2 1419.1,449.4 1424.5,448.9 C1429.9,448.4 1430.9,451.9 1434.6,455.7 C1438.3,459.5 1439.6,464.4 1443.0,468.1 C1446.4,471.8 1448.0,470.7 1451.4,474.1 C1454.8,477.5 1455.8,481.7 1459.8,484.9 C1463.8,488.1 1466.9,487.8 1471.6,490.0 C1476.3,492.2 1478.9,494.5 1483.3,496.0 C1487.7,497.5 1491.4,497.4 1493.4,497.7" fill="none" stroke="#f0821f" stroke-width="3.2" stroke-linejoin="round" stroke-linecap="round"/><path d="M117.3,601.9 C119.3,598.5 123.4,591.8 127.4,585.1 C131.4,578.4 134.1,571.3 137.5,568.3 C140.9,565.3 140.8,571.0 144.2,570.0 C147.6,569.0 150.3,566.0 154.3,563.3 C158.3,560.6 160.4,560.9 164.4,556.5 C168.4,552.1 171.1,545.6 174.5,541.4 C177.9,537.2 177.5,536.1 181.2,535.3 C184.9,534.5 189.0,534.2 193.0,537.4 C197.0,540.6 198.6,547.4 201.4,551.5 C204.2,555.6 205.0,556.7 207.0,558.0 C209.0,559.3 208.6,553.5 211.5,558.2 C214.4,562.9 217.6,575.8 221.6,581.7 C225.6,587.6 227.7,585.5 231.7,587.5 C235.7,589.5 237.0,588.9 241.7,591.8 C246.4,594.7 251.2,598.5 255.2,601.9 C259.2,605.3 258.7,607.0 261.7,608.6 C264.7,610.2 266.4,608.5 270.1,609.7 C273.8,610.9 276.5,614.6 280.2,614.4 C283.9,614.2 285.2,608.7 288.6,608.6 C292.0,608.5 293.6,615.0 297.0,613.7 C300.4,612.4 301.7,603.6 305.4,601.9 C309.1,600.2 311.5,607.0 315.5,605.3 C319.5,603.6 321.6,598.9 325.6,593.5 C329.6,588.1 331.7,582.1 335.7,578.4 C339.7,574.7 341.8,574.5 345.8,575.0 C349.8,575.5 351.9,579.4 355.9,581.1 C359.9,582.8 362.3,583.3 366.0,583.4 C369.7,583.5 370.7,585.7 374.4,581.7 C378.1,577.7 379.5,569.3 384.5,563.3 C389.5,557.3 394.9,552.5 399.6,551.5 C404.3,550.5 404.3,559.5 408.0,558.2 C411.7,556.9 414.5,546.0 418.1,544.8 C421.7,543.6 422.1,556.9 425.8,552.2 C429.5,547.5 432.4,528.4 436.6,521.2 C440.8,514.0 442.7,516.7 446.7,516.2 C450.7,515.7 452.0,515.8 456.7,518.5 C461.4,521.2 466.5,526.7 470.2,529.6 C473.9,532.5 471.8,530.8 475.1,533.0 C478.4,535.2 482.2,537.7 486.9,540.7 C491.6,543.7 494.9,544.9 498.6,548.1 C502.3,551.3 501.9,555.2 505.3,556.5 C508.7,557.8 511.0,554.5 515.4,554.8 C519.8,555.1 523.2,560.9 527.2,558.2 C531.2,555.5 532.2,547.4 535.6,541.4 C539.0,535.4 540.6,530.7 544.0,528.0 C547.4,525.3 548.7,526.7 552.4,528.0 C556.1,529.3 558.5,533.2 562.5,534.7 C566.5,536.2 568.9,534.5 572.6,535.7 C576.3,536.9 577.6,541.0 581.0,540.7 C584.4,540.4 585.7,535.9 589.4,534.0 C593.1,532.1 595.5,534.5 599.5,531.3 C603.5,528.1 605.6,520.3 609.6,517.9 C613.6,515.5 616.3,520.3 619.7,519.5 C623.1,518.7 623.4,512.8 626.4,513.8 C629.4,514.8 630.8,523.2 634.8,524.6 C638.8,526.0 641.6,520.3 646.6,520.6 C651.6,520.9 655.3,523.8 660.0,526.3 C664.7,528.8 666.1,530.3 670.1,533.0 C674.1,535.7 677.2,537.7 680.2,539.7 C683.2,541.7 681.8,540.9 685.1,543.1 C688.4,545.3 692.2,546.8 696.9,550.8 C701.6,554.8 703.6,559.8 708.6,563.3 C713.6,566.8 717.4,566.6 722.1,568.3 C726.8,570.0 728.5,572.4 732.2,571.7 C735.9,571.0 736.9,568.3 740.6,564.9 C744.3,561.5 746.7,555.5 750.7,554.8 C754.7,554.1 756.7,558.8 760.7,561.6 C764.7,564.4 767.1,567.8 770.8,569.0 C774.5,570.2 775.5,568.4 779.2,567.6 C782.9,566.8 785.3,568.1 789.3,564.9 C793.3,561.7 795.7,556.3 799.4,551.5 C803.1,546.7 804.4,542.4 807.8,540.7 C811.2,539.0 813.2,542.0 816.2,543.1 C819.2,544.2 820.0,546.4 823.0,546.4 C826.0,546.4 828.0,544.0 831.4,543.1 C834.8,542.2 836.4,545.1 839.8,542.1 C843.2,539.1 844.8,531.5 848.2,528.0 C851.6,524.5 852.9,524.6 856.6,524.6 C860.3,524.6 862.7,526.3 866.7,528.0 C870.7,529.7 872.7,530.7 876.7,533.0 C880.7,535.3 882.8,537.3 886.8,539.7 C890.8,542.1 893.6,542.8 896.9,544.8 C900.2,546.8 899.5,546.8 903.5,549.8 C907.5,552.8 912.3,558.9 917.0,559.9 C921.7,560.9 923.4,557.8 927.1,554.8 C930.8,551.8 932.5,545.3 935.5,544.8 C938.5,544.3 939.2,552.9 942.2,552.2 C945.2,551.5 946.9,547.3 950.6,541.4 C954.3,535.5 957.0,526.6 960.7,522.9 C964.4,519.2 965.7,522.2 969.1,522.9 C972.5,523.6 974.1,526.5 977.5,526.3 C980.9,526.1 982.5,521.9 985.9,521.9 C989.3,521.9 990.6,528.1 994.3,526.3 C998.0,524.5 1000.7,516.5 1004.4,512.8 C1008.1,509.1 1009.6,510.5 1012.8,507.8 C1016.0,505.1 1017.5,499.7 1020.5,499.4 C1023.5,499.1 1024.8,505.8 1028.0,506.1 C1031.2,506.4 1033.0,500.8 1036.4,501.0 C1039.8,501.2 1041.1,507.1 1044.8,507.1 C1048.5,507.1 1050.8,503.2 1054.8,501.0 C1058.8,498.8 1059.8,497.8 1064.9,496.0 C1070.0,494.2 1075.0,491.8 1080.1,492.0 C1085.2,492.2 1086.5,495.7 1090.2,497.0 C1093.9,498.3 1094.1,497.3 1098.4,498.4 C1102.7,499.5 1107.2,501.0 1111.9,502.7 C1116.6,504.4 1117.3,507.1 1122.0,507.1 C1126.7,507.1 1130.0,503.6 1135.4,502.7 C1140.8,501.8 1144.5,505.0 1148.9,502.7 C1153.3,500.4 1153.9,495.4 1157.3,491.0 C1160.7,486.6 1162.0,481.9 1165.7,480.9 C1169.4,479.9 1171.8,483.7 1175.8,485.9 C1179.8,488.1 1180.9,489.4 1185.9,492.0 C1190.9,494.6 1195.6,498.2 1201.0,498.7 C1206.4,499.2 1208.1,494.5 1212.8,494.3 C1217.5,494.1 1220.1,495.0 1224.5,497.7 C1228.9,500.4 1230.9,506.5 1234.6,507.8 C1238.3,509.1 1239.6,503.1 1243.0,504.4 C1246.4,505.7 1247.4,513.2 1251.4,514.5 C1255.4,515.8 1258.1,511.4 1263.2,511.1 C1268.3,510.8 1271.7,512.1 1276.7,512.8 C1281.7,513.5 1283.7,513.2 1288.4,514.5 C1293.1,515.8 1294.5,517.3 1300.2,519.5 C1305.9,521.7 1310.9,522.6 1316.9,525.3 C1322.9,528.0 1324.9,530.6 1330.3,533.0 C1335.7,535.4 1338.4,535.4 1343.8,537.4 C1349.2,539.4 1351.8,544.7 1357.2,543.1 C1362.6,541.5 1364.6,532.6 1370.7,529.6 C1376.8,526.6 1382.1,528.0 1387.5,528.0 C1392.9,528.0 1393.6,526.9 1397.6,529.6 C1401.6,532.3 1403.7,540.7 1407.7,541.4 C1411.7,542.1 1412.8,537.4 1417.8,533.0 C1422.8,528.6 1428.2,520.5 1432.9,519.5 C1437.6,518.5 1437.9,527.6 1441.3,527.9 C1444.7,528.2 1446.0,519.5 1449.7,521.2 C1453.4,522.9 1455.4,533.0 1459.8,536.4 C1464.2,539.8 1466.9,536.7 1471.6,538.0 C1476.3,539.3 1478.9,541.4 1483.3,543.1 C1487.7,544.8 1491.4,545.7 1493.4,546.4" fill="none" stroke="#465a6f" stroke-width="3.3" stroke-linejoin="round" stroke-linecap="round"/><path d="M62.0,650.0 L48.6,638.4 L55.9,638.6 L59.9,632.4 Z" fill="#6b8df0" stroke="#4d5560" stroke-width="0.6" stroke-linejoin="miter"/><path d="M62.3,632.7 L55.9,616.2 L62.3,619.8 L68.7,616.2 Z" fill="#6b8df0" stroke="#4d5560" stroke-width="0.6" stroke-linejoin="miter"/><path d="M86.4,632.7 L83.9,615.2 L89.3,620.1 L96.3,618.1 Z" fill="#6b8df0" stroke="#4d5560" stroke-width="0.6" stroke-linejoin="miter"/><path d="M111.5,614.1 L101.8,599.3 L108.8,601.5 L114.3,596.6 Z" fill="#6b8df0" stroke="#4d5560" stroke-width="0.6" stroke-linejoin="miter"/><path d="M114.5,613.0 L108.1,596.5 L114.5,600.1 L120.9,596.5 Z" fill="#6b8df0" stroke="#4d5560" stroke-width="0.6" stroke-linejoin="miter"/><path d="M131.0,576.8 L133.1,559.2 L137.1,565.4 L144.4,565.2 Z" fill="#6b8df0" stroke="#4d5560" stroke-width="0.6" stroke-linejoin="miter"/><path d="M168.4,559.3 L150.7,559.1 L156.4,554.5 L155.5,547.2 Z" fill="#8ef291" stroke="#4d5560" stroke-width="0.6" stroke-linejoin="miter"/><path d="M193.6,536.2 L177.9,544.3 L180.8,537.5 L176.5,531.6 Z" fill="#8ef291" stroke="#4d5560" stroke-width="0.6" stroke-linejoin="miter"/><path d="M219.7,552.5 L207.2,565.1 L207.9,557.7 L202.0,553.4 Z" fill="#8ef291" stroke="#4d5560" stroke-width="0.6" stroke-linejoin="miter"/><path d="M245.5,582.1 L233.5,595.1 L233.9,587.8 L227.9,583.6 Z" fill="#6b8df0" stroke="#4d5560" stroke-width="0.6" stroke-linejoin="miter"/><path d="M259.4,600.0 L271.3,613.1 L264.0,612.0 L259.3,617.7 Z" fill="#6b8df0" stroke="#4d5560" stroke-width="0.6" stroke-linejoin="miter"/><path d="M285.5,600.0 L297.4,613.1 L290.1,612.0 L285.4,617.7 Z" fill="#6b8df0" stroke="#4d5560" stroke-width="0.6" stroke-linejoin="miter"/><path d="M311.6,596.4 L323.5,609.5 L316.2,608.4 L311.5,614.1 Z" fill="#6b8df0" stroke="#4d5560" stroke-width="0.6" stroke-linejoin="miter"/><path d="M336.9,565.3 L348.8,578.4 L341.5,577.3 L336.8,583.0 Z" fill="#6b8df0" stroke="#4d5560" stroke-width="0.6" stroke-linejoin="miter"/><path d="M369.6,572.5 L369.0,590.2 L364.6,584.4 L357.3,585.2 Z" fill="#6b8df0" stroke="#4d5560" stroke-width="0.6" stroke-linejoin="miter"/><path d="M397.8,552.9 L389.8,568.7 L388.2,561.5 L381.3,559.2 Z" fill="#8ef291" stroke="#4d5560" stroke-width="0.6" stroke-linejoin="miter"/><path d="M417.5,534.1 L424.2,550.5 L417.7,547.0 L411.4,550.7 Z" fill="#8ef291" stroke="#4d5560" stroke-width="0.6" stroke-linejoin="miter"/><path d="M437.7,511.6 L453.8,519.0 L446.7,520.9 L444.6,527.9 Z" fill="#8ef291" stroke="#4d5560" stroke-width="0.6" stroke-linejoin="miter"/><path d="M463.7,525.9 L479.8,533.3 L472.7,535.2 L470.6,542.2 Z" fill="#8ef291" stroke="#4d5560" stroke-width="0.6" stroke-linejoin="miter"/><path d="M489.5,538.4 L505.6,545.8 L498.5,547.7 L496.4,554.7 Z" fill="#8ef291" stroke="#4d5560" stroke-width="0.6" stroke-linejoin="miter"/><path d="M514.5,547.3 L530.6,554.7 L523.5,556.6 L521.4,563.6 Z" fill="#8ef291" stroke="#4d5560" stroke-width="0.6" stroke-linejoin="miter"/><path d="M539.5,523.0 L557.2,523.9 L551.3,528.2 L552.0,535.6 Z" fill="#8ef291" stroke="#4d5560" stroke-width="0.6" stroke-linejoin="miter"/><path d="M564.5,530.3 L582.2,530.5 L576.5,535.1 L577.4,542.4 Z" fill="#8ef291" stroke="#4d5560" stroke-width="0.6" stroke-linejoin="miter"/><path d="M592.5,525.9 L608.6,533.3 L601.5,535.2 L599.4,542.2 Z" fill="#8ef291" stroke="#4d5560" stroke-width="0.6" stroke-linejoin="miter"/><path d="M616.1,510.5 L633.8,510.7 L628.1,515.3 L629.0,522.6 Z" fill="#8ef291" stroke="#4d5560" stroke-width="0.6" stroke-linejoin="miter"/><path d="M642.6,519.7 L660.3,519.9 L654.6,524.5 L655.5,531.8 Z" fill="#8ef291" stroke="#4d5560" stroke-width="0.6" stroke-linejoin="miter"/><path d="M668.4,536.2 L686.1,536.4 L680.4,541.0 L681.3,548.3 Z" fill="#8ef291" stroke="#4d5560" stroke-width="0.6" stroke-linejoin="miter"/><path d="M694.3,549.0 L712.0,549.2 L706.3,553.8 L707.2,561.1 Z" fill="#8ef291" stroke="#4d5560" stroke-width="0.6" stroke-linejoin="miter"/><path d="M720.1,567.1 L737.8,567.0 L732.1,571.7 L733.2,579.0 Z" fill="#6b8df0" stroke="#4d5560" stroke-width="0.6" stroke-linejoin="miter"/><path d="M746.6,549.0 L762.8,556.1 L755.7,558.1 L753.7,565.2 Z" fill="#8ef291" stroke="#4d5560" stroke-width="0.6" stroke-linejoin="miter"/><path d="M775.3,556.4 L787.4,569.3 L780.1,568.4 L775.5,574.1 Z" fill="#6b8df0" stroke="#4d5560" stroke-width="0.6" stroke-linejoin="miter"/><path d="M801.8,534.3 L813.9,547.2 L806.6,546.3 L802.0,552.0 Z" fill="#8ef291" stroke="#4d5560" stroke-width="0.6" stroke-linejoin="miter"/><path d="M827.6,534.3 L839.7,547.2 L832.4,546.3 L827.8,552.0 Z" fill="#8ef291" stroke="#4d5560" stroke-width="0.6" stroke-linejoin="miter"/><path d="M850.4,518.5 L866.5,525.9 L859.4,527.8 L857.3,534.8 Z" fill="#8ef291" stroke="#4d5560" stroke-width="0.6" stroke-linejoin="miter"/><path d="M874.7,536.5 L892.4,536.7 L886.7,541.3 L887.6,548.6 Z" fill="#8ef291" stroke="#4d5560" stroke-width="0.6" stroke-linejoin="miter"/><path d="M900.8,547.2 L918.5,547.4 L912.8,552.0 L913.7,559.3 Z" fill="#8ef291" stroke="#4d5560" stroke-width="0.6" stroke-linejoin="miter"/><path d="M928.0,538.6 L944.1,546.0 L937.0,547.9 L934.9,554.9 Z" fill="#8ef291" stroke="#4d5560" stroke-width="0.6" stroke-linejoin="miter"/><path d="M952.3,519.5 L970.0,519.7 L964.3,524.3 L965.2,531.6 Z" fill="#8ef291" stroke="#4d5560" stroke-width="0.6" stroke-linejoin="miter"/><path d="M978.1,517.7 L995.8,517.9 L990.1,522.5 L991.0,529.8 Z" fill="#8ef291" stroke="#4d5560" stroke-width="0.6" stroke-linejoin="miter"/><path d="M1003.8,506.7 L1021.5,506.9 L1015.8,511.5 L1016.7,518.8 Z" fill="#8ef291" stroke="#4d5560" stroke-width="0.6" stroke-linejoin="miter"/><path d="M1029.6,497.4 L1047.3,497.6 L1041.6,502.2 L1042.5,509.5 Z" fill="#f8f39a" stroke="#4d5560" stroke-width="0.6" stroke-linejoin="miter"/><path d="M1055.4,493.8 L1073.1,494.0 L1067.4,498.6 L1068.3,505.9 Z" fill="#f8f39a" stroke="#4d5560" stroke-width="0.6" stroke-linejoin="miter"/><path d="M1081.9,494.1 L1099.6,494.3 L1093.9,498.9 L1094.8,506.2 Z" fill="#f8f39a" stroke="#4d5560" stroke-width="0.6" stroke-linejoin="miter"/><path d="M1107.2,499.6 L1124.9,499.8 L1119.2,504.4 L1120.1,511.7 Z" fill="#f8f39a" stroke="#4d5560" stroke-width="0.6" stroke-linejoin="miter"/><path d="M1133.0,503.0 L1149.5,496.6 L1145.9,503.0 L1149.5,509.4 Z" fill="#f8f39a" stroke="#4d5560" stroke-width="0.6" stroke-linejoin="miter"/><path d="M1158.0,480.5 L1174.5,474.1 L1170.9,480.5 L1174.5,486.9 Z" fill="#f8f39a" stroke="#4d5560" stroke-width="0.6" stroke-linejoin="miter"/><path d="M1183.8,490.0 L1200.3,483.6 L1196.7,490.0 L1200.3,496.4 Z" fill="#f8f39a" stroke="#4d5560" stroke-width="0.6" stroke-linejoin="miter"/><path d="M1210.3,495.2 L1226.8,488.8 L1223.2,495.2 L1226.8,501.6 Z" fill="#f8f39a" stroke="#4d5560" stroke-width="0.6" stroke-linejoin="miter"/><path d="M1235.4,503.0 L1251.9,496.6 L1248.3,503.0 L1251.9,509.4 Z" fill="#f8f39a" stroke="#4d5560" stroke-width="0.6" stroke-linejoin="miter"/><path d="M1261.9,510.6 L1278.4,504.2 L1274.8,510.6 L1278.4,517.0 Z" fill="#8ef291" stroke="#4d5560" stroke-width="0.6" stroke-linejoin="miter"/><path d="M1287.2,520.9 L1303.7,514.5 L1300.1,520.9 L1303.7,527.3 Z" fill="#8ef291" stroke="#4d5560" stroke-width="0.6" stroke-linejoin="miter"/><path d="M1313.7,525.0 L1330.0,518.0 L1326.6,524.5 L1330.4,530.8 Z" fill="#8ef291" stroke="#4d5560" stroke-width="0.6" stroke-linejoin="miter"/><path d="M1338.7,537.1 L1355.2,530.7 L1351.6,537.1 L1355.2,543.5 Z" fill="#8ef291" stroke="#4d5560" stroke-width="0.6" stroke-linejoin="miter"/><path d="M1364.5,528.6 L1381.0,522.2 L1377.4,528.6 L1381.0,535.0 Z" fill="#8ef291" stroke="#4d5560" stroke-width="0.6" stroke-linejoin="miter"/><path d="M1391.0,530.0 L1407.5,523.6 L1403.9,530.0 L1407.5,536.4 Z" fill="#8ef291" stroke="#4d5560" stroke-width="0.6" stroke-linejoin="miter"/><path d="M1416.1,528.6 L1432.6,522.2 L1429.0,528.6 L1432.6,535.0 Z" fill="#8ef291" stroke="#4d5560" stroke-width="0.6" stroke-linejoin="miter"/><path d="M1441.8,520.9 L1458.3,514.5 L1454.7,520.9 L1458.3,527.3 Z" fill="#8ef291" stroke="#4d5560" stroke-width="0.6" stroke-linejoin="miter"/><path d="M1467.6,539.3 L1484.1,532.9 L1480.5,539.3 L1484.1,545.7 Z" fill="#8ef291" stroke="#4d5560" stroke-width="0.6" stroke-linejoin="miter"/><path d="M80.0,604.0 L87.8,619.9 L81.1,616.9 L75.1,621.0 Z" fill="#6b8df0" fill-opacity="0.35" stroke="#4d5560" stroke-opacity="0.35" stroke-width="0.6"/><path d="M72.0,612.0 L75.4,629.4 L69.8,624.7 L62.8,627.1 Z" fill="#9aa8c0" fill-opacity="0.3" stroke="#4d5560" stroke-opacity="0.3" stroke-width="0.6"/><line x1="57" y1="663.5" x2="1502" y2="663.5" stroke="#666" stroke-width="1.3"/><line x1="57.00" y1="663.5" x2="57.00" y2="720" stroke="#666" stroke-width="1.3"/><line x1="108.61" y1="663.5" x2="108.61" y2="671" stroke="#666" stroke-width="1.3"/><line x1="160.21" y1="663.5" x2="160.21" y2="671" stroke="#666" stroke-width="1.3"/><line x1="211.82" y1="663.5" x2="211.82" y2="671" stroke="#666" stroke-width="1.3"/><line x1="263.43" y1="663.5" x2="263.43" y2="720" stroke="#666" stroke-width="1.3"/><line x1="315.04" y1="663.5" x2="315.04" y2="671" stroke="#666" stroke-width="1.3"/><line x1="366.64" y1="663.5" x2="366.64" y2="671" stroke="#666" stroke-width="1.3"/><line x1="418.25" y1="663.5" x2="418.25" y2="671" stroke="#666" stroke-width="1.3"/><line x1="469.86" y1="663.5" x2="469.86" y2="720" stroke="#666" stroke-width="1.3"/><line x1="521.46" y1="663.5" x2="521.46" y2="671" stroke="#666" stroke-width="1.3"/><line x1="573.07" y1="663.5" x2="573.07" y2="671" stroke="#666" stroke-width="1.3"/><line x1="624.68" y1="663.5" x2="624.68" y2="671" stroke="#666" stroke-width="1.3"/><line x1="676.29" y1="663.5" x2="676.29" y2="720" stroke="#666" stroke-width="1.3"/><line x1="727.89" y1="663.5" x2="727.89" y2="671" stroke="#666" stroke-width="1.3"/><line x1="779.50" y1="663.5" x2="779.50" y2="671" stroke="#666" stroke-width="1.3"/><line x1="831.11" y1="663.5" x2="831.11" y2="671" stroke="#666" stroke-width="1.3"/><line x1="882.71" y1="663.5" x2="882.71" y2="720" stroke="#666" stroke-width="1.3"/><line x1="934.32" y1="663.5" x2="934.32" y2="671" stroke="#666" stroke-width="1.3"/><line x1="985.93" y1="663.5" x2="985.93" y2="671" stroke="#666" stroke-width="1.3"/><line x1="1037.54" y1="663.5" x2="1037.54" y2="671" stroke="#666" stroke-width="1.3"/><line x1="1089.14" y1="663.5" x2="1089.14" y2="720" stroke="#666" stroke-width="1.3"/><line x1="1140.75" y1="663.5" x2="1140.75" y2="671" stroke="#666" stroke-width="1.3"/><line x1="1192.36" y1="663.5" x2="1192.36" y2="671" stroke="#666" stroke-width="1.3"/><line x1="1243.96" y1="663.5" x2="1243.96" y2="671" stroke="#666" stroke-width="1.3"/><line x1="1295.57" y1="663.5" x2="1295.57" y2="720" stroke="#666" stroke-width="1.3"/><line x1="1347.18" y1="663.5" x2="1347.18" y2="671" stroke="#666" stroke-width="1.3"/><line x1="1398.79" y1="663.5" x2="1398.79" y2="671" stroke="#666" stroke-width="1.3"/><line x1="1450.39" y1="663.5" x2="1450.39" y2="671" stroke="#666" stroke-width="1.3"/><line x1="1502.00" y1="663.5" x2="1502.00" y2="720" stroke="#666" stroke-width="1.3"/><line x1="7" y1="719.3" x2="1552" y2="719.3" stroke="#d0d3d8" stroke-width="1.5"/></svg><div class="t" style="left:78.61px;width:60px;text-align:center;top:679px;font-size:12.5px;font-weight:700;color:#111">6am</div><div class="t" style="left:181.82px;width:60px;text-align:center;top:679px;font-size:12.5px;font-weight:700;color:#111">6pm</div><div class="t" style="left:103.21px;width:120px;text-align:center;top:693px;font-size:17px;font-weight:700;color:#111">Saturday</div><div class="t" style="left:285.04px;width:60px;text-align:center;top:679px;font-size:12.5px;font-weight:700;color:#111">6am</div><div class="t" style="left:388.25px;width:60px;text-align:center;top:679px;font-size:12.5px;font-weight:700;color:#111">6pm</div><div class="t" style="left:309.64px;width:120px;text-align:center;top:693px;font-size:17px;font-weight:700;color:#111">Sunday</div><div class="t" style="left:491.46px;width:60px;text-align:center;top:679px;font-size:12.5px;font-weight:700;color:#111">6am</div><div class="t" style="left:594.68px;width:60px;text-align:center;top:679px;font-size:12.5px;font-weight:700;color:#111">6pm</div><div class="t" style="left:516.07px;width:120px;text-align:center;top:693px;font-size:17px;font-weight:700;color:#111">Monday</div><div class="t" style="left:697.89px;width:60px;text-align:center;top:679px;font-size:12.5px;font-weight:700;color:#111">6am</div><div class="t" style="left:801.11px;width:60px;text-align:center;top:679px;font-size:12.5px;font-weight:700;color:#111">6pm</div><div class="t" style="left:722.50px;width:120px;text-align:center;top:693px;font-size:17px;font-weight:700;color:#111">Tuesday</div><div class="t" style="left:904.32px;width:60px;text-align:center;top:679px;font-size:12.5px;font-weight:700;color:#111">6am</div><div class="t" style="left:1007.54px;width:60px;text-align:center;top:679px;font-size:12.5px;font-weight:700;color:#111">6pm</div><div class="t" style="left:928.93px;width:120px;text-align:center;top:693px;font-size:17px;font-weight:700;color:#111">Wednesday</div><div class="t" style="left:1110.75px;width:60px;text-align:center;top:679px;font-size:12.5px;font-weight:700;color:#111">6am</div><div class="t" style="left:1213.96px;width:60px;text-align:center;top:679px;font-size:12.5px;font-weight:700;color:#111">6pm</div><div class="t" style="left:1135.36px;width:120px;text-align:center;top:693px;font-size:17px;font-weight:700;color:#111">Thursday</div><div class="t" style="left:1317.18px;width:60px;text-align:center;top:679px;font-size:12.5px;font-weight:700;color:#111">6am</div><div class="t" style="left:1420.39px;width:60px;text-align:center;top:679px;font-size:12.5px;font-weight:700;color:#111">6pm</div><div class="t" style="left:1341.79px;width:120px;text-align:center;top:693px;font-size:17px;font-weight:700;color:#111">Friday</div><div class="t" style="left:7px;width:40px;text-align:right;top:354.0px;font-size:13px;color:#222">40</div><div class="t" style="left:7px;width:40px;text-align:right;top:390.8px;font-size:13px;color:#222">35</div><div class="t" style="left:7px;width:40px;text-align:right;top:428.2px;font-size:13px;color:#222">30</div><div class="t" style="left:7px;width:40px;text-align:right;top:465.6px;font-size:13px;color:#222">25</div><div class="t" style="left:7px;width:40px;text-align:right;top:502.9px;font-size:13px;color:#222">20</div><div class="t" style="left:7px;width:40px;text-align:right;top:539.6px;font-size:13px;color:#222">15</div><div class="t" style="left:7px;width:40px;text-align:right;top:576.7px;font-size:13px;color:#222">10</div><div class="t" style="left:7px;width:40px;text-align:right;top:613.9px;font-size:13px;color:#222">5</div><div class="t" style="left:7px;width:40px;text-align:right;top:650.6px;font-size:13px;color:#222">0</div><div class="t" style="left:7px;width:40px;text-align:right;top:343px;font-size:13.5px;font-weight:700;color:#111">°C</div><div class="t" style="left:87.5px;top:414.5px;font-size:13px;color:#222">75</div><div class="t" style="left:87.5px;top:493.6px;font-size:13px;color:#222">50</div><div class="t" style="left:87.5px;top:572.8px;font-size:13px;color:#222">25</div><div class="t" style="left:87.5px;top:652.9px;font-size:13px;color:#222">0</div><div class="t" style="left:87.5px;top:338px;font-size:13px;color:#222">100<b style="font-size:12.5px;color:#111">%</b></div><div class="t" style="left:26px;top:568px;font-size:11.3px;color:#222;transform:translate(-50%,-50%) rotate(-90deg)">TEMPERATURE</div><div class="t" style="left:77.8px;top:535px;font-size:11.7px;color:#222;transform:translate(-50%,-50%) rotate(-90deg)">CHANCE OF RAIN</div><div class="t" style="left:1512.5px;top:398.3px;font-size:13px;color:#222">50</div><div class="t" style="left:1512.5px;top:449.0px;font-size:13px;color:#222">40</div><div class="t" style="left:1512.5px;top:499.5px;font-size:13px;color:#222">30</div><div class="t" style="left:1512.5px;top:550.1px;font-size:13px;color:#222">20</div><div class="t" style="left:1512.5px;top:600.0px;font-size:13px;color:#222">10</div><div class="t" style="left:1512.5px;top:650.8px;font-size:13px;color:#222">0</div><div class="t" style="left:1501px;width:60px;text-align:center;top:343px;font-size:13.5px;font-weight:700;color:#111">km/h</div><div class="t" style="left:1540px;top:549px;font-size:11.5px;color:#222;transform:translate(-50%,-50%) rotate(-90deg)">WIND SPEED</div><div class="a" style="left:7px;top:720px;width:1545px;height:141px;background:#fff;border-radius:0 0 8px 8px;box-shadow:1px 1px 3px rgba(0,0,0,0.07)"></div><div class="a" style="left:45px;top:749.2px;width:193.6px;height:36.6px;background:#fff;border:1px solid #f08228;border-radius:4px;overflow:hidden"><div class="a" style="right:0;top:0;width:31.5px;height:100%;background:#ef8229"></div><div class="a" style="right:8.5px;top:15.6px;width:14px;height:3.2px;background:#fff"></div></div><div class="t" style="left:56.5px;top:760.7px;font-size:13px;font-weight:700;color:#111">Temperature (°C)</div><div class="a" style="left:251.2px;top:749.2px;width:193.6px;height:36.6px;background:#fff;border:1px solid #9cc3e3;border-radius:4px;overflow:hidden"><div class="a" style="right:0;top:0;width:31.5px;height:100%;background:#9cc3e3"></div><div class="a" style="right:8.5px;top:15.6px;width:14px;height:3.2px;background:#fff"></div></div><div class="t" style="left:262.7px;top:760.7px;font-size:13px;font-weight:700;color:#111">Chance of Rain (%)</div><div class="a" style="left:457.3px;top:749.2px;width:193.6px;height:36.6px;background:#fff;border:1px solid #4a5d73;border-radius:4px;overflow:hidden"><div class="a" style="right:0;top:0;width:31.5px;height:100%;background:#4a5d73"></div><div class="a" style="right:8.5px;top:15.6px;width:14px;height:3.2px;background:#fff"></div></div><div class="t" style="left:468.8px;top:760.7px;font-size:13px;font-weight:700;color:#111">Wind Speed (km/h)</div><div class="a" style="left:663.3px;top:749.2px;width:193.6px;height:36.6px;background:#eff0f4;border:1px solid #d3d6db;border-radius:4px;overflow:hidden"><div class="a" style="right:0;top:0;width:26.5px;height:100%;background:#cdd0d5"></div><div class="t" style="right:0;width:26.5px;text-align:center;top:8px;font-size:19px;color:#fff">+</div></div><div class="t" style="left:789.3px;top:755.9px;width:35.2px;height:22px;background:#69a6e0;border-radius:4px;color:#fff;font-size:12.5px;line-height:22px;text-align:center">PRO</div><div class="a" style="left:674.8px;top:749.5px;font-size:13px;font-weight:700;color:#111;line-height:17px;white-space:nowrap">Wind Gusts<br>(km/h)</div><div class="a" style="left:870px;top:749.2px;width:193.6px;height:36.6px;background:#eff0f4;border:1px solid #d3d6db;border-radius:4px;overflow:hidden"><div class="a" style="right:0;top:0;width:32px;height:100%;background:#cdd0d5"></div><div class="t" style="right:0;width:32px;text-align:center;top:8px;font-size:19px;color:#fff">+</div></div><div class="t" style="left:881.5px;top:760.7px;font-size:13px;font-weight:700;color:#111">Feels Like (°C)</div><div class="a" style="left:1076.3px;top:749.2px;width:193.6px;height:36.6px;background:#eff0f4;border:1px solid #d3d6db;border-radius:4px;overflow:hidden"><div class="a" style="right:0;top:0;width:32px;height:100%;background:#cdd0d5"></div><div class="t" style="right:0;width:32px;text-align:center;top:8px;font-size:19px;color:#fff">+</div></div><div class="t" style="left:1087.8px;top:760.7px;font-size:13px;font-weight:700;color:#111">Humidity (%)</div><div class="a" style="left:1282.5px;top:749.2px;width:193.6px;height:36.6px;background:#eff0f4;border:1px solid #d3d6db;border-radius:4px;overflow:hidden"><div class="a" style="right:0;top:0;width:32px;height:100%;background:#cdd0d5"></div><div class="t" style="right:0;width:32px;text-align:center;top:8px;font-size:19px;color:#fff">+</div></div><div class="t" style="left:1294.0px;top:760.7px;font-size:13px;font-weight:700;color:#111">Dew Point (°C)</div><div class="a" style="left:45px;top:799.2px;width:193.6px;height:36.6px;background:#eff0f4;border:1px solid #d3d6db;border-radius:4px;overflow:hidden"><div class="a" style="right:0;top:0;width:29.1px;height:100%;background:#cdd0d5"></div><div class="t" style="right:0;width:29.1px;text-align:center;top:8px;font-size:19px;color:#fff">+</div></div><div class="t" style="left:164.3px;top:805.9px;width:39.3px;height:22px;background:#69a6e0;border-radius:4px;color:#fff;font-size:12.5px;line-height:22px;text-align:center">PRO</div><div class="a" style="left:56.5px;top:799.5px;font-size:13px;font-weight:700;color:#111;line-height:17px;white-space:nowrap">Cloud Cover<br>(%)</div><div class="a" style="left:251.2px;top:799.2px;width:193.6px;height:36.6px;background:#eff0f4;border:1px solid #d3d6db;border-radius:4px;overflow:hidden"><div class="a" style="right:0;top:0;width:32px;height:100%;background:#cdd0d5"></div><div class="t" style="right:0;width:32px;text-align:center;top:8px;font-size:19px;color:#fff">+</div></div><div class="t" style="left:262.7px;top:810.7px;font-size:13px;font-weight:700;color:#111">Fire Danger Ratings</div><div class="a" style="left:457.3px;top:799.2px;width:193.6px;height:36.6px;background:#eff0f4;border:1px solid #d3d6db;border-radius:4px;overflow:hidden"><div class="a" style="right:0;top:0;width:32px;height:100%;background:#cdd0d5"></div><div class="t" style="right:0;width:32px;text-align:center;top:8px;font-size:19px;color:#fff">+</div></div><div class="t" style="left:468.8px;top:810.7px;font-size:13px;font-weight:700;color:#111">UV Index</div><div class="a" style="left:663.3px;top:799.2px;width:193.6px;height:36.6px;background:#eff0f4;border:1px solid #d3d6db;border-radius:4px;overflow:hidden"><div class="a" style="right:0;top:0;width:32px;height:100%;background:#cdd0d5"></div><div class="t" style="right:0;width:32px;text-align:center;top:8px;font-size:19px;color:#fff">+</div></div><div class="t" style="left:674.8px;top:810.7px;font-size:13px;font-weight:700;color:#111">Pollen Index</div><div class="a" style="left:870px;top:799.2px;width:193.6px;height:36.6px;background:#eff0f4;border:1px solid #d3d6db;border-radius:4px;overflow:hidden"><div class="a" style="right:0;top:0;width:32px;height:100%;background:#cdd0d5"></div><div class="t" style="right:0;width:32px;text-align:center;top:8px;font-size:19px;color:#fff">+</div></div><div class="t" style="left:881.5px;top:810.7px;font-size:13px;font-weight:700;color:#111">Sunrise/Sunset Times</div><div class="a" style="left:1076.3px;top:799.2px;width:193.6px;height:36.6px;background:#eff0f4;border:1px solid #d3d6db;border-radius:4px;overflow:hidden"><div class="a" style="right:0;top:0;width:32px;height:100%;background:#cdd0d5"></div><div class="t" style="right:0;width:32px;text-align:center;top:8px;font-size:19px;color:#fff">+</div></div><div class="t" style="left:1087.8px;top:810.7px;font-size:13px;font-weight:700;color:#111">Moon Phases &amp; Times</div><div class="a" style="left:1282.5px;top:799.2px;width:193.6px;height:36.6px;background:#eff0f4;border:1px solid #d3d6db;border-radius:4px;overflow:hidden"><div class="a" style="right:0;top:0;width:32px;height:100%;background:#cdd0d5"></div><div class="t" style="right:0;width:32px;text-align:center;top:8px;font-size:19px;color:#fff">+</div></div><div class="t" style="left:1294.0px;top:810.7px;font-size:13px;font-weight:700;color:#111">Pressure (hPa)</div><div class="a" style="left:415px;top:815.8px;width:69px;height:38.5px;background:#f5f6f8;border-radius:6px;box-shadow:0 2px 6px rgba(0,0,0,0.12), 0 0 1px rgba(0,0,0,0.15)"></div><div class="t" style="left:426.5px;top:827px;font-size:14.4px;color:#222">Search</div>
</body></html>
